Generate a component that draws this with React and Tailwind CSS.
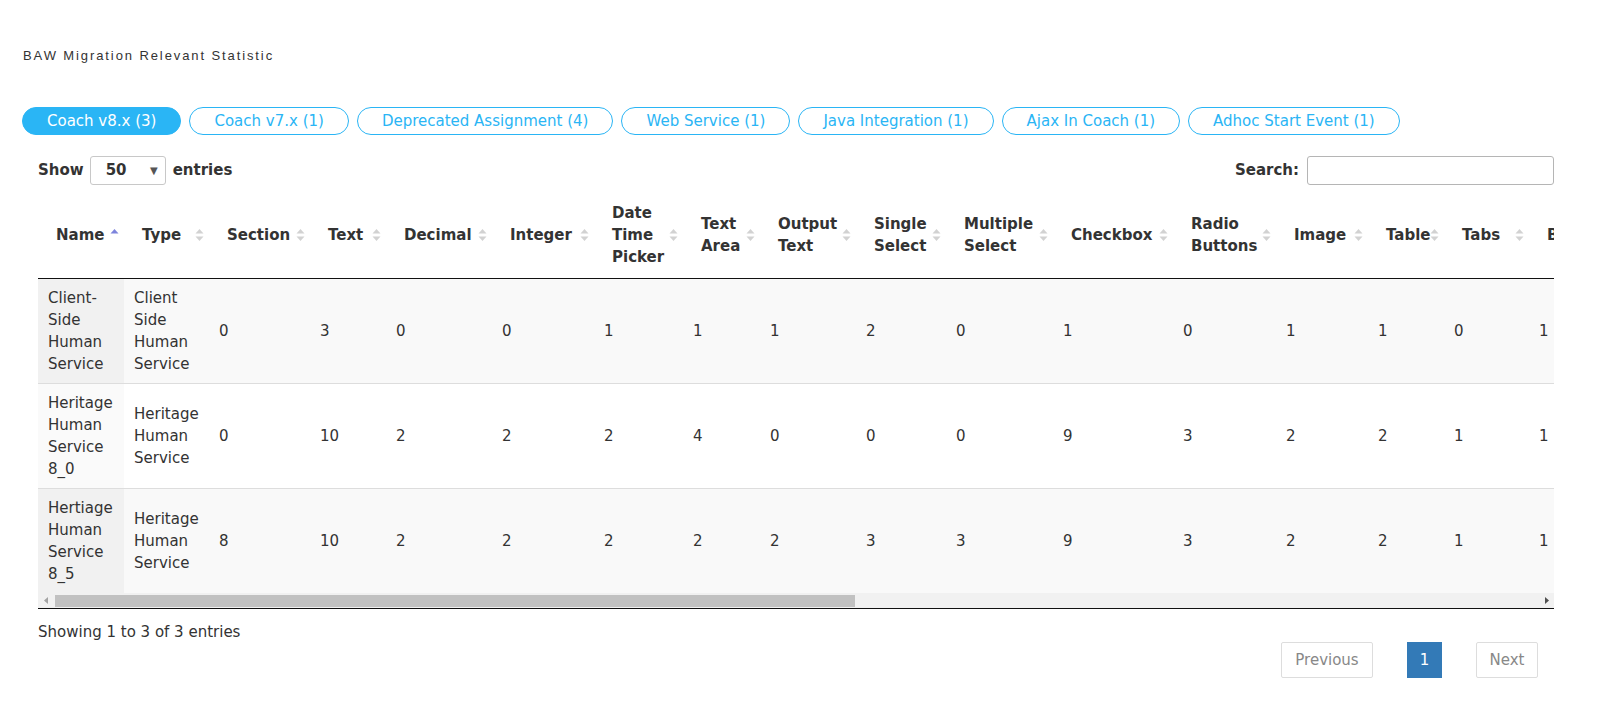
import React from 'react';

const tabs = [
  { label: 'Coach v8.x (3)', active: true },
  { label: 'Coach v7.x (1)' },
  { label: 'Deprecated Assignment (4)' },
  { label: 'Web Service (1)' },
  { label: 'Java Integration (1)' },
  { label: 'Ajax In Coach (1)' },
  { label: 'Adhoc Start Event (1)' },
];

const columns = [
  { title: 'Name', w: 'w-[86px]' },
  { title: 'Type', w: 'w-[85px]' },
  { title: 'Section', w: 'w-[101px]' },
  { title: 'Text', w: 'w-[76px]' },
  { title: 'Decimal', w: 'w-[106px]' },
  { title: 'Integer', w: 'w-[102px]' },
  { title: 'Date Time Picker', w: 'w-[89px]' },
  { title: 'Text Area', w: 'w-[77px]' },
  { title: 'Output Text', w: 'w-[96px]' },
  { title: 'Single Select', w: 'w-[90px]' },
  { title: 'Multiple Select', w: 'w-[107px]' },
  { title: 'Checkbox', w: 'w-[120px]' },
  { title: 'Radio Buttons', w: 'w-[103px]' },
  { title: 'Image', w: 'w-[92px]' },
  { title: 'Table', w: 'w-[76px]' },
  { title: 'Tabs', w: 'w-[85px]' },
  { title: 'Button', w: 'w-[95px]' },
  { title: 'Panel', w: 'w-[90px]' },
  { title: 'Well', w: 'w-[80px]' },
  { title: 'Modal', w: 'w-[90px]' },
  { title: 'Horizontal Layout', w: 'w-[115px]' },
  { title: 'Vertical Layout', w: 'w-[110px]' },
  { title: 'Collapsible Panel', w: 'w-[120px]' },
  { title: 'Output Link', w: 'w-[100px]' },
  { title: 'Icon', w: 'w-[80px]' },
  { title: 'Progress Bar', w: 'w-[105px]' },
  { title: 'Signature', w: 'w-[110px]' },
  { title: 'Custom HTML', w: 'w-[110px]' },
  { title: 'Content Box', w: 'w-[110px]' },
];

const rows = [
  ['Client-Side Human Service', 'Client Side Human Service', 0, 3, 0, 0, 1, 1, 1, 2, 0, 1, 0, 1, 1, 0, 1, 2, 0, 0, 3, 1, 0, 0, 1, 0, 0, 0, 1],
  ['Heritage Human Service 8_0', 'Heritage Human Service', 0, 10, 2, 2, 2, 4, 0, 0, 0, 9, 3, 2, 2, 1, 1, 4, 1, 0, 5, 3, 1, 0, 2, 0, 0, 1, 2],
  ['Hertiage Human Service 8_5', 'Heritage Human Service', 8, 10, 2, 2, 2, 2, 2, 3, 3, 9, 3, 2, 2, 1, 1, 4, 1, 1, 6, 3, 2, 1, 2, 1, 0, 1, 2],
];

const SortIcon = ({ active }) => (
  <svg className="absolute right-[5px] top-1/2 -translate-y-1/2" width="9" height="15" viewBox="0 0 9 15">
    <path d="M0.5 6 L4.5 1.5 L8.5 6 Z" fill={active ? '#7d84dc' : '#d2d2d2'} />
    {!active && <path d="M0.5 9 L8.5 9 L4.5 13.5 Z" fill="#d2d2d2" />}
  </svg>
);

const App = () => {
  return (
    <div className="min-h-[705px] bg-white pl-[22px] font-['DejaVu_Sans',Verdana,sans-serif] text-[15px] text-[#333]">
      <div className="pl-[1px] pt-[47px] font-['Liberation_Sans',Arial,sans-serif] text-[13px] leading-[18px] tracking-[1.9px] text-[#333]">
        BAW Migration Relevant Statistic
      </div>

      <div className="mt-[42px] flex gap-[8px]">
        {tabs.map((t) => (
          <button
            key={t.label}
            className={`h-[28px] rounded-full border border-[#2ab5f5] px-[24px] text-[15px] leading-[26px] ${
              t.active ? 'bg-[#2ab5f5] text-white' : 'bg-white text-[#2ab5f5]'
            }`}
          >
            {t.label}
          </button>
        ))}
      </div>

      <div className="ml-[16px] w-[1516px]">
        <div className="mt-[21px] flex h-[29px] items-center justify-between">
          <div className="flex items-center font-bold">
            <span>Show</span>
            <div className="ml-[6px] mr-[7px] flex h-[29px] w-[76px] items-center justify-between rounded-[3px] border border-[#c8c8c8] pl-[15px] pr-[7px]">
              <span className="text-[#333]">50</span>
              <span className="text-[10px] font-normal text-[#555]">▼</span>
            </div>
            <span>entries</span>
          </div>
          <div className="flex items-center font-bold">
            <span>Search:</span>
            <div className="ml-[8px] h-[29px] w-[247px] rounded-[3px] border border-[#b5b5b5] bg-white" />
          </div>
        </div>

        <div className="mt-[7px] overflow-hidden">
          <table className="w-[2806px] table-fixed border-collapse">
            <thead>
              <tr>
                {columns.map((c, i) => (
                  <th
                    key={c.title}
                    className={`${c.w} relative border-b border-[#111] py-[10px] pl-[18px] pr-[14px] text-left align-middle font-bold leading-[22px]`}
                  >
                    {c.title}
                    <SortIcon active={i === 0} />
                  </th>
                ))}
              </tr>
            </thead>
            <tbody>
              {rows.map((r, ri) => {
                const odd = ri % 2 === 0;
                return (
                  <tr key={ri} className={odd ? 'bg-[#f9f9f9]' : 'bg-white'}>
                    {r.map((v, ci) => (
                      <td
                        key={ci}
                        className={`px-[10px] py-[8px] align-middle leading-[22px] ${
                          ri > 0 ? 'border-t border-[#ddd]' : ''
                        } ${ci === 0 ? (odd ? 'bg-[#f1f1f1]' : 'bg-[#fafafa]') : ''}`}
                      >
                        {v}
                      </td>
                    ))}
                  </tr>
                );
              })}
            </tbody>
          </table>
        </div>

        <div className="flex h-[16px] items-center border-b border-[#111] bg-[#f1f1f1]">
          <div className="flex h-[15px] w-[15px] items-center justify-center">
            <svg width="4" height="7" viewBox="0 0 4 7">
              <path d="M4 0 L0 3.5 L4 7 Z" fill="#a3a3a3" />
            </svg>
          </div>
          <div className="ml-[2px] h-[12px] w-[800px] bg-[#c1c1c1]" />
          <div className="flex-1" />
          <div className="flex h-[15px] w-[15px] items-center justify-center">
            <svg width="4" height="7" viewBox="0 0 4 7">
              <path d="M0 0 L4 3.5 L0 7 Z" fill="#505050" />
            </svg>
          </div>
        </div>

        <div className="flex items-start justify-between pt-[12px]">
          <div className="leading-[22px]">Showing 1 to 3 of 3 entries</div>
          <div className="mt-[21px] flex items-center gap-[34px] pr-[16px]">
            <div className="flex h-[36px] w-[92px] items-center justify-center rounded-[2px] border border-[#ddd] text-[#888]">
              Previous
            </div>
            <div className="flex h-[36px] w-[35px] items-center justify-center bg-[#337ab7] text-white">1</div>
            <div className="flex h-[36px] w-[62px] items-center justify-center rounded-[2px] border border-[#ddd] text-[#888]">
              Next
            </div>
          </div>
        </div>
      </div>
    </div>
  );
};

export default App;
